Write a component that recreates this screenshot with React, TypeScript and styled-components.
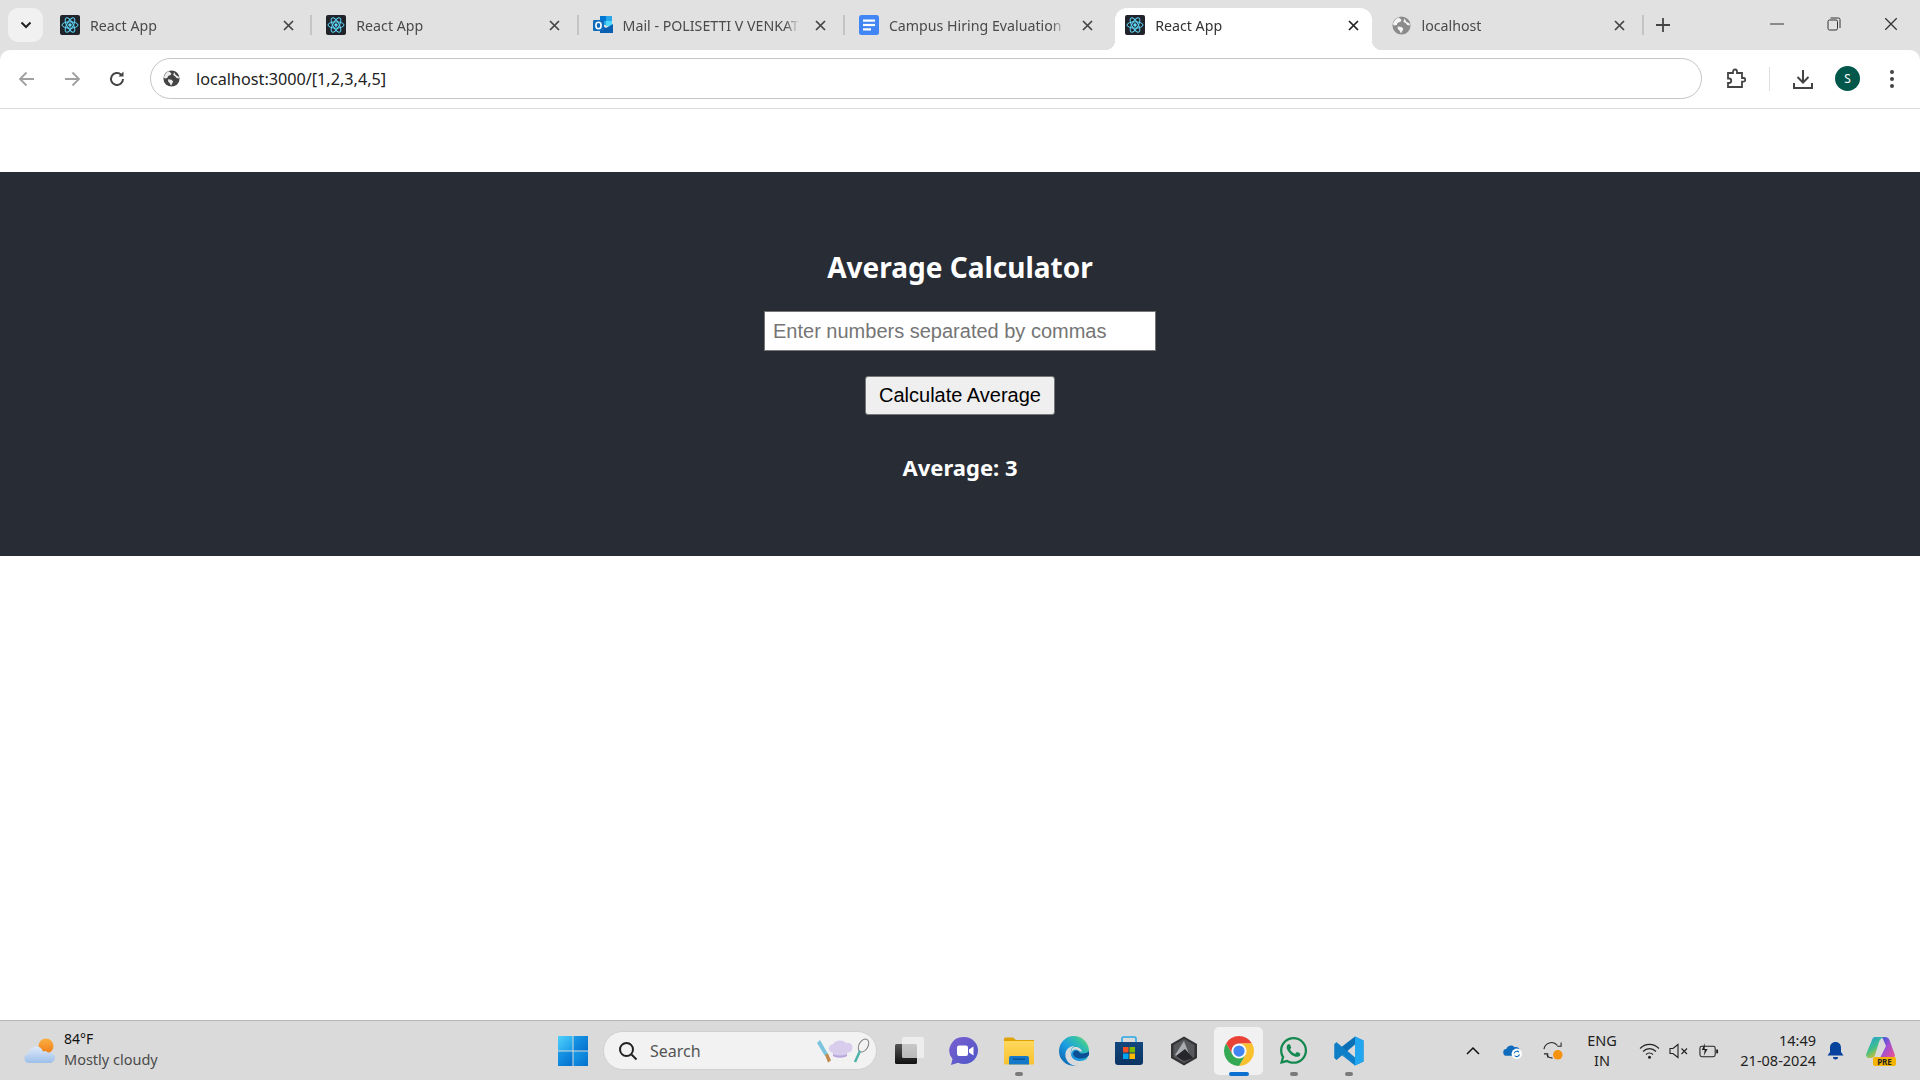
import React from "react";
import styled, { createGlobalStyle } from "styled-components";
import { FaWhatsapp } from "react-icons/fa";

const GlobalStyle = createGlobalStyle`
  html, body { margin: 0; padding: 0; background: #fff; overflow: hidden; }
  * { box-sizing: border-box; }
`;

const UI_FONT = `"Noto Sans", "Open Sans", sans-serif`;

const ReactIcon = () => (
  <svg width="20" height="20" viewBox="0 0 20 20">
    <rect width="20" height="20" rx="2" fill="#20232a" />
    <g fill="none" stroke="#61dafb" strokeWidth="1">
      <ellipse cx="10" cy="10" rx="8" ry="3.2" />
      <ellipse cx="10" cy="10" rx="8" ry="3.2" transform="rotate(60 10 10)" />
      <ellipse cx="10" cy="10" rx="8" ry="3.2" transform="rotate(120 10 10)" />
    </g>
    <circle cx="10" cy="10" r="1.7" fill="#61dafb" />
  </svg>
);

const OutlookIcon = () => (
  <svg width="20" height="20" viewBox="0 0 20 20">
    <rect x="7" y="1" width="12" height="9" fill="#28a8ea" />
    <rect x="7" y="1" width="6" height="5" fill="#0078d4" />
    <rect x="13" y="6" width="6" height="5" fill="#50d9ff" />
    <path d="M7 9l6 4 7-4v9H7z" fill="#0a5fb0" />
    <rect x="0" y="5" width="11" height="11" rx="1" fill="#0f6cbd" />
    <ellipse cx="5.5" cy="10.5" rx="2.6" ry="3.2" fill="none" stroke="#fff" strokeWidth="1.6" />
  </svg>
);

const DocsIcon = () => (
  <svg width="20" height="20" viewBox="0 0 20 20">
    <rect width="20" height="20" rx="2.5" fill="#4285f4" />
    <rect x="4" y="4.5" width="12" height="2.2" fill="#fff" />
    <rect x="4" y="8.9" width="12" height="2.2" fill="#fff" />
    <rect x="4" y="13.3" width="8" height="2.2" fill="#fff" />
  </svg>
);

const GlobeIcon = ({ color = "#8b8b8b", size = 19 }: { color?: string; size?: number }) => (
  <svg width={size} height={size} viewBox="0 0 20 20">
    <circle cx="10" cy="10" r="9.5" fill={color} />
    <path d="M7 1.5l3 2.5-1 2-3 1-1 2.5-3 .5-1-1.500C2 5 4 2.500 7 1.500z" fill="#fff" opacity="0.9" />
    <path d="M6 11l4 .5 2 2-1 2-1.500 3-1.500-3L6 13.500z" fill="#fff" opacity="0.9" />
    <path d="M13 2.500l2 3.500 3.500 2 .5 2-3-.5-1.500-2L12 6z" fill="#fff" opacity="0.9" />
  </svg>
);

const favicons = {
  react: <ReactIcon />,
  outlook: <OutlookIcon />,
  docs: <DocsIcon />,
  globe: <GlobeIcon />,
};

const tabList: { id: number; title: string; icon: keyof typeof favicons; active?: boolean }[] = [
  { id: 1, title: "React App", icon: "react" },
  { id: 2, title: "React App", icon: "react" },
  { id: 3, title: "Mail - POLISETTI V VENKAT", icon: "outlook" },
  { id: 4, title: "Campus Hiring Evaluation -", icon: "docs" },
  { id: 5, title: "React App", icon: "react", active: true },
  { id: 6, title: "localhost", icon: "globe" },
];

const CloseIcon = ({ size = 11, width = 1.7, color = "#444" }: { size?: number; width?: number; color?: string }) => (
  <svg width={size} height={size} viewBox="0 0 11 11">
    <path d="M1 1l9 9M10 1l-9 9" stroke={color} strokeWidth={width} fill="none" />
  </svg>
);

const centerApps = [
  { id: "task", label: "Task view" },
  { id: "meet", label: "Meet" },
  { id: "files", label: "Files", dot: true },
  { id: "edge", label: "Edge" },
  { id: "store", label: "Store" },
  { id: "hex", label: "Hex" },
  { id: "chrome", label: "Chrome", active: true },
  { id: "whatsapp", label: "WhatsApp", dot: true },
  { id: "code", label: "VS Code", dot: true },
];

const AppIcon = ({ id }: { id: string }) => {
  switch (id) {
    case "task":
      return (
        <svg width="30" height="30" viewBox="0 0 30 30">
          <defs>
            <linearGradient id="taskDark" x1="0" y1="0" x2="0" y2="1">
              <stop offset="0" stopColor="#555" />
              <stop offset="1" stopColor="#111" />
            </linearGradient>
          </defs>
          <rect x="1" y="8" width="22" height="20" rx="1.500" fill="url(#taskDark)" />
          <rect x="8" y="1" width="22" height="21" rx="1.500" fill="#f4f4f4" opacity="0.72" />
        </svg>
      );
    case "meet":
      return (
        <svg width="30" height="30" viewBox="0 0 30 30">
          <defs>
            <linearGradient id="meetBg" x1="0" y1="0" x2="1" y2="1">
              <stop offset="0" stopColor="#7b5fcf" />
              <stop offset="1" stopColor="#4c56c8" />
            </linearGradient>
          </defs>
          <path d="M15 1a14 13.500 0 1 1-6 25.700L2 29l1.500-6A14 13.500 0 0 1 15 1z" fill="url(#meetBg)" />
          <rect x="8" y="9.500" width="11" height="10.500" rx="2" fill="#fff" />
          <path d="M20 13.500l4.500-3v9l-4.500-3z" fill="#fff" />
        </svg>
      );
    case "files":
      return (
        <svg width="30" height="28" viewBox="0 0 30 28">
          <defs>
            <linearGradient id="folderBg" x1="0" y1="0" x2="0" y2="1">
              <stop offset="0" stopColor="#ffd85c" />
              <stop offset="1" stopColor="#f8c230" />
            </linearGradient>
          </defs>
          <path d="M0 2a1.500 1.500 0 0 1 1.500-1.500H9L12 3h18v4H0z" fill="#dfa200" />
          <rect x="0" y="4" width="30" height="23.500" rx="1" fill="url(#folderBg)" />
          <path d="M5 27.500V21a2 2 0 0 1 2-2h16a2 2 0 0 1 2 2v6.500z" fill="#1479c9" />
          <rect x="9" y="21.500" width="12" height="1.300" fill="#0b4f8e" />
        </svg>
      );
    case "edge":
      return (
        <svg width="30" height="30" viewBox="0 0 30 30">
          <defs>
            <linearGradient id="edgeBg" x1="0" y1="1" x2="1" y2="0">
              <stop offset="0" stopColor="#0b57a4" />
              <stop offset="0.45" stopColor="#1b9de2" />
              <stop offset="0.75" stopColor="#35c1a8" />
              <stop offset="1" stopColor="#86e35f" />
            </linearGradient>
          </defs>
          <circle cx="15" cy="15" r="15" fill="url(#edgeBg)" />
          <path d="M30 19c-2 3-6 3.500-9 3.500-4 0-7-2.500-7-5 0-2 2-3.500 4-3 3 .5 1.500 3 5 3 3.500 0 7-1 7-3" fill="#0c4f94" />
          <path d="M18.500 30C11 30 5.500 24 6.500 17.500 7.300 12 12 10 15 10c-3 2-4 5-3 9 1 3.500 4 6 9 6 3 0 6-1 8-3-2 5-6 8-10.500 8z" fill="#dadada" />
          <path d="M15 11c4-.5 7.500 1.500 8 4.500-3 .5-4-2-6.500-2-3 0-4.500 3-3.500 6-1.500-3.500-.5-7.500 2-8.500z" fill="#dadada" />
        </svg>
      );
    case "store":
      return (
        <svg width="30" height="30" viewBox="0 0 30 30">
          <defs>
            <linearGradient id="storeBg" x1="0" y1="0" x2="0" y2="1">
              <stop offset="0" stopColor="#12477f" />
              <stop offset="1" stopColor="#0b3463" />
            </linearGradient>
          </defs>
          <path d="M8 7V2.500A1.500 1.500 0 0 1 9.500 1h11A1.500 1.500 0 0 1 22 2.500V7" fill="none" stroke="#2aa7e8" strokeWidth="1.600" />
          <path d="M1 6h28v20a3 3 0 0 1-3 3H4a3 3 0 0 1-3-3z" fill="url(#storeBg)" />
          <rect x="9" y="11" width="5.500" height="5.500" fill="#f25022" />
          <rect x="15.500" y="11" width="5.500" height="5.500" fill="#7fba00" />
          <rect x="9" y="17.500" width="5.500" height="5.500" fill="#00a4ef" />
          <rect x="15.500" y="17.500" width="5.500" height="5.500" fill="#ffb900" />
        </svg>
      );
    case "hex":
      return (
        <svg width="28" height="30" viewBox="0 0 28 30">
          <path d="M14 0.500L27 8v14l-13 7.500L1 22V8z" fill="#333336" />
          <path d="M14 3L24.500 9v12L14 27 3.500 21V9z" fill="#55575b" />
          <path d="M14 5l5 13-11 3-3-2z" fill="#a9acb0" />
          <path d="M6 20l9-7 8 9-9 3z" fill="#26262a" />
        </svg>
      );
    case "chrome":
      return (
        <svg width="30" height="30" viewBox="0 0 24 24">
          <path d="M12 0A12 12 0 0 0 1.610 6L6.800 15A6 6 0 0 1 12 6h10.390A12 12 0 0 0 12 0z" fill="#ea4335" />
          <path d="M22.390 6H12a6 6 0 0 1 5.200 9L12 24A12 12 0 0 0 22.390 6z" fill="#fbc02d" />
          <path d="M1.610 6A12 12 0 0 0 12 24l5.200-9A6 6 0 0 1 6.800 15z" fill="#34a853" />
          <circle cx="12" cy="12" r="5.500" fill="#fff" />
          <circle cx="12" cy="12" r="4.500" fill="#4285f4" />
        </svg>
      );
    case "whatsapp":
      return <FaWhatsapp size={31} color="#14894f" />;
    default:
      return (
        <svg width="30" height="30" viewBox="0 0 30 30">
          <path d="M21 .5L29.500 4.500v21L21 29.500 8 17l13-10z" fill="#0e7fc9" />
          <path d="M21 .5L29.500 4.500v21L21 29.500z" fill="#23a6f0" />
          <path d="M21 .5V8L6 21l-3.500 3L.5 22V8l2-1 5 4z" fill="#0a6fb5" />
          <path d="M21 29.500V22L6 9 2.500 6 .5 8v14l2 1 5-4z" fill="#0e7fc9" opacity="0.9" />
          <path d="M21 8.500L13.500 15l7.500 6.500z" fill="#dadada" />
        </svg>
      );
  }
};

export default function App() {
  return (
    <>
      <GlobalStyle />
      <Screen>
        <TabStrip>
          <TabSearch>
            <svg width="12" height="8" viewBox="0 0 12 8">
              <path d="M1.500 1.500L6 6l4.500-4.500" stroke="#222" strokeWidth="2" fill="none" />
            </svg>
          </TabSearch>
          {tabList.map(({ id, title, icon, active }) => (
            <Tab key={id} $active={active}>
              <TabIcon>{favicons[icon]}</TabIcon>
              <TabTitle>{title}</TabTitle>
              <TabClose>
                <CloseIcon color={active ? "#222" : "#444"} />
              </TabClose>
              {!active && id !== 4 && <TabDivider />}
            </Tab>
          ))}
          <NewTab>
            <svg width="16" height="16" viewBox="0 0 16 16">
              <path d="M8 1v14M1 8h14" stroke="#444" strokeWidth="1.800" />
            </svg>
          </NewTab>
          <WindowButtons>
            <WindowButton>
              <svg width="14" height="14" viewBox="0 0 14 14">
                <path d="M0 7h14" stroke="#333" strokeWidth="1" />
              </svg>
            </WindowButton>
            <WindowButton>
              <svg width="14" height="14" viewBox="0 0 14 14">
                <rect x="1" y="3" width="9.500" height="10" rx="1.500" stroke="#333" fill="none" />
                <path d="M3.500 1h8a1.500 1.500 0 0 1 1.500 1.500V11" stroke="#333" fill="none" />
              </svg>
            </WindowButton>
            <WindowButton>
              <CloseIcon size={14} width={1} color="#333" />
            </WindowButton>
          </WindowButtons>
        </TabStrip>

        <Toolbar>
          <NavButton>
            <svg width="18" height="18" viewBox="0 0 18 18">
              <path d="M16 9H2.500M8.500 2.500L2 9l6.500 6.500" stroke="#a0a0a0" strokeWidth="1.800" fill="none" />
            </svg>
          </NavButton>
          <NavButton>
            <svg width="18" height="18" viewBox="0 0 18 18">
              <path d="M2 9h13.500M9.500 2.500L16 9l-6.500 6.500" stroke="#a0a0a0" strokeWidth="1.800" fill="none" />
            </svg>
          </NavButton>
          <NavButton>
            <svg width="18" height="18" viewBox="0 0 18 18">
              <path d="M15 9a6 6 0 1 1-1.800-4.300" stroke="#444" strokeWidth="2" fill="none" />
              <path d="M15.500 1.500v5h-5z" fill="#444" />
            </svg>
          </NavButton>
          <Omnibox>
            <GlobeIcon color="#444" size={17} />
            <UrlText>localhost:3000/[1,2,3,4,5]</UrlText>
          </Omnibox>
          <ToolIcons>
            <ToolButton>
              <svg width="20" height="22" viewBox="0 0 20 22">
                <path
                  d="M2 5h5V3.500a2 2 0 0 1 4 0V5h5v5h1.500a1.800 1.800 0 0 1 0 3.600H16V19H2v-4h1a2.200 2.200 0 0 0 0-4.500H2z"
                  stroke="#444"
                  strokeWidth="1.800"
                  fill="none"
                />
              </svg>
            </ToolButton>
            <ToolDivider />
            <ToolButton>
              <svg width="22" height="22" viewBox="0 0 22 22">
                <path d="M11 2v12M5.500 9l5.500 5.500L16.500 9" stroke="#444" strokeWidth="2" fill="none" />
                <path d="M2 15v5h18v-5" stroke="#444" strokeWidth="2" fill="none" />
              </svg>
            </ToolButton>
            <Avatar>S</Avatar>
            <ToolButton>
              <svg width="6" height="20" viewBox="0 0 6 20">
                <circle cx="3" cy="3" r="2" fill="#444" />
                <circle cx="3" cy="10" r="2" fill="#444" />
                <circle cx="3" cy="17" r="2" fill="#444" />
              </svg>
            </ToolButton>
          </ToolIcons>
        </Toolbar>

        <TopGap />

        <AppHeader>
          <Title>Average Calculator</Title>
          <NumbersInput type="text" placeholder="Enter numbers separated by commas" />
          <CalcButton>Calculate Average</CalcButton>
          <Result>Average: 3</Result>
        </AppHeader>

        <PageRest />

        <Taskbar>
          <Weather>
            <svg width="32" height="26" viewBox="0 0 32 26">
              <defs>
                <linearGradient id="sunFill" x1="0" y1="0" x2="0" y2="1">
                  <stop offset="0" stopColor="#fbb040" />
                  <stop offset="1" stopColor="#ef7d1a" />
                </linearGradient>
                <linearGradient id="cloudFill" x1="0" y1="0" x2="0" y2="1">
                  <stop offset="0" stopColor="#dfeafa" />
                  <stop offset="1" stopColor="#9dbfe9" />
                </linearGradient>
              </defs>
              <circle cx="22" cy="8" r="7.500" fill="url(#sunFill)" />
              <path
                d="M5 25a4.500 4.500 0 0 1-1-8.900C5 12 9 8 13 8.500c3 .3 5 2 6 5a4 4 0 0 1 5 1c4 0 7 1.500 7 5S28 25 25 25z"
                fill="url(#cloudFill)"
              />
            </svg>
            <WeatherText>
              <Temp>84°F</Temp>
              <Condition>Mostly cloudy</Condition>
            </WeatherText>
          </Weather>

          <StartButton>
            <svg width="30" height="30" viewBox="0 0 30 30">
              <defs>
                <linearGradient id="winA" x1="0" y1="0" x2="1" y2="1">
                  <stop offset="0" stopColor="#4fd0fb" />
                  <stop offset="1" stopColor="#1a9ce8" />
                </linearGradient>
                <linearGradient id="winB" x1="0" y1="0" x2="1" y2="1">
                  <stop offset="0" stopColor="#1a9ce8" />
                  <stop offset="1" stopColor="#0470ce" />
                </linearGradient>
              </defs>
              <rect x="0" y="0" width="14.500" height="14.500" fill="url(#winA)" />
              <rect x="15.500" y="0" width="14.500" height="14.500" fill="url(#winB)" />
              <rect x="0" y="15.500" width="14.500" height="14.500" fill="url(#winB)" />
              <rect x="15.500" y="15.500" width="14.500" height="14.500" fill="url(#winB)" />
            </svg>
          </StartButton>

          <SearchPill>
            <svg width="20" height="20" viewBox="0 0 20 20">
              <circle cx="8.500" cy="8.500" r="6.500" stroke="#222" strokeWidth="2" fill="none" />
              <path d="M13.500 13.500L18.500 18.500" stroke="#222" strokeWidth="2" />
            </svg>
            <SearchLabel>Search</SearchLabel>
            <svg width="54" height="26" viewBox="0 0 54 26">
              <path d="M1 5l3-3 8 14-3 2z" fill="#7cc4dd" />
              <path d="M9 17l3-1.500 3 7-3 2z" fill="#c08a4e" />
              <path d="M17 15c-5-1-6-8 0-9 2-4 10-5 13-1 5-1 8 3 6 7-1 2-3 2.500-5 3v3c-4 2-10 2-14 0z" fill="#d9cdee" />
              <path d="M17 16c4 2 10 2 14 0v2c-4 2-10 2-14 0z" fill="#b7a6da" />
              <ellipse cx="47.500" cy="7.500" rx="4.500" ry="7" transform="rotate(30 47.500 7.500)" fill="none" stroke="#7d7d7d" strokeWidth="1" />
              <path d="M44 13l-5 11" stroke="#4fb3a7" strokeWidth="2.500" />
            </svg>
          </SearchPill>

          <AppSlots>
            {centerApps.map(({ id, label, dot, active }) => (
              <AppSlot key={id} $active={active} title={label}>
                <AppIcon id={id} />
                {dot && <RunDot />}
                {active && <ActiveBar />}
              </AppSlot>
            ))}
          </AppSlots>

          <Tray>
            <TrayIcon $width={20}>
              <svg width="14" height="9" viewBox="0 0 14 9">
                <path d="M1 8l6-6 6 6" stroke="#111" strokeWidth="1.500" fill="none" />
              </svg>
            </TrayIcon>
            <TrayIcon $width={20} $left={20}>
              <svg width="21" height="18" viewBox="0 0 21 18">
                <path d="M4 14a3.500 3.500 0 0 1-.5-7C4.500 3 10 2 12 5c3-1 5.500 1 5.500 3.500A3 3 0 0 1 17 14z" fill="#0f6cbd" />
                <circle cx="14.500" cy="12" r="5.500" fill="#fff" />
                <path d="M11.800 11.500a2.800 2.800 0 0 1 5-1.200M17.200 12.500a2.800 2.800 0 0 1-5 1.200" stroke="#0f6cbd" strokeWidth="1.200" fill="none" />
              </svg>
            </TrayIcon>
            <TrayIcon $width={20} $left={20}>
              <svg width="21" height="22" viewBox="0 0 21 22">
                <path d="M1 9a8 8 0 0 1 14-4M19 2v4h-4M4 15.500c1.500 2 4 3 6 3M1 14h4v4" stroke="#222" strokeWidth="1.100" fill="none" />
                <circle cx="15.500" cy="15" r="5" fill="#f5920e" />
              </svg>
            </TrayIcon>
            <Lang>
              <span>ENG</span>
              <span>IN</span>
            </Lang>
            <TrayIcon $width={22} $left={19}>
              <svg width="21" height="16" viewBox="0 0 21 16">
                <path d="M1 5.500c5.500-5.500 13.500-5.500 19 0M4 8.500c3.800-3.800 9.200-3.800 13 0M7 11.500c2-2 5-2 7 0" stroke="#222" strokeWidth="1.100" fill="none" />
                <circle cx="10.500" cy="14.300" r="1.500" fill="#222" />
              </svg>
            </TrayIcon>
            <TrayIcon $width={20} $left={9}>
              <svg width="20" height="16" viewBox="0 0 20 16">
                <path d="M1 5.500h3L9 1.500v13l-5-4H1z" stroke="#222" strokeWidth="1.100" fill="none" />
                <path d="M12.500 5.500l5.500 5.500M18 5.500L12.500 11" stroke="#222" strokeWidth="1.100" />
              </svg>
            </TrayIcon>
            <TrayIcon $width={20} $left={10}>
              <svg width="21" height="17" viewBox="0 0 21 17">
                <rect x="1" y="4" width="16" height="11" rx="2" stroke="#222" strokeWidth="1.100" fill="none" />
                <rect x="18" y="7.500" width="2" height="4" fill="#222" />
                <path d="M6 1L3 8h3l-1 6 4-7H6z" fill="#222" />
              </svg>
            </TrayIcon>
            <Clock>
              <span>14:49</span>
              <span>21-08-2024</span>
            </Clock>
            <TrayIcon $width={18} $left={10}>
              <svg width="17" height="20" viewBox="0 0 17 20">
                <path d="M8.500 1C5 1 3 3.500 3 7v4l-2.500 3.500h16L14 11V7c0-3.500-2-6-5.500-6z" fill="#07439c" />
                <path d="M6 16h5a2.500 2.500 0 0 1-5 0z" fill="#07439c" />
              </svg>
            </TrayIcon>
            <Copilot>
              <svg width="30" height="24" viewBox="0 0 30 24">
                <defs>
                  <linearGradient id="copA" x1="0" y1="0" x2="0.600" y2="1">
                    <stop offset="0" stopColor="#1f9be6" />
                    <stop offset="0.55" stopColor="#3fbf8a" />
                    <stop offset="1" stopColor="#f0c020" />
                  </linearGradient>
                  <linearGradient id="copB" x1="0" y1="0" x2="1" y2="1">
                    <stop offset="0" stopColor="#1f5fe0" />
                    <stop offset="0.5" stopColor="#a64fd0" />
                    <stop offset="1" stopColor="#f0558a" />
                  </linearGradient>
                </defs>
                <path d="M19 1c2.500 0 4 1.500 4.700 3.500l5 14c.7 2-1 3.500-3 3.500H14l6-12-3-7c-.5-1.200-2-1.500-3-1.500z" fill="url(#copB)" />
                <path d="M9 1h10c-3 0-5 2-6 5L9 19c-.6 2-2 3-4 3H3c-2 0-3.500-2-2.800-4L6 4c.6-2 1.500-3 3-3z" fill="url(#copA)" />
              </svg>
              <PreBadge>PRE</PreBadge>
            </Copilot>
          </Tray>
        </Taskbar>
      </Screen>
    </>
  );
}

const Screen = styled.div`
  width: 1920px;
  height: 1080px;
  display: flex;
  flex-direction: column;
  font-family: ${UI_FONT};
  background: #e1e1e1;
  overflow: hidden;
`;

const TabStrip = styled.div`
  height: 50px;
  flex: none;
  display: flex;
  align-items: flex-end;
  padding-left: 8px;
`;

const TabSearch = styled.div`
  width: 35px;
  height: 34px;
  margin: 0 7px 8px 0;
  border-radius: 10px;
  background: #f1f1f1;
  display: flex;
  align-items: center;
  justify-content: center;
  flex: none;
`;

const Tab = styled.div<{ $active?: boolean }>`
  position: relative;
  width: ${(p) => (p.$active ? "256.8px" : "266.3px")};
  margin-right: ${(p) => (p.$active ? "9.5px" : "0")};
  height: 42px;
  flex: none;
  display: flex;
  align-items: center;
  padding: 0 ${(p) => (p.$active ? "13px" : "22.500px")} 8px 10px;
  border-radius: 12px 12px 0 0;
  background: ${(p) => (p.$active ? "#fff" : "transparent")};
  color: ${(p) => (p.$active ? "#333" : "#4a4a4a")};
  ${(p) =>
    p.$active &&
    `
    &::before, &::after {
      content: "";
      position: absolute;
      bottom: 0;
      width: 10px;
      height: 10px;
    }
    &::before {
      left: -10px;
      background: radial-gradient(circle at 0 0, transparent 10px, #fff 10.5px);
    }
    &::after {
      right: -10px;
      background: radial-gradient(circle at 100% 0, transparent 10px, #fff 10.5px);
    }
  `}
`;

const TabIcon = styled.span`
  width: 20px;
  height: 20px;
  flex: none;
  display: flex;
  align-items: center;
  justify-content: center;
`;

const TabTitle = styled.span`
  margin-left: 10px;
  width: 180px;
  font-size: 14.2px;
  white-space: nowrap;
  overflow: hidden;
  -webkit-mask-image: linear-gradient(to right, #000 90%, transparent 98%);
  mask-image: linear-gradient(to right, #000 90%, transparent 98%);
`;

const TabClose = styled.span`
  margin-left: auto;
  display: flex;
`;

const TabDivider = styled.span`
  position: absolute;
  right: 4px;
  top: 7px;
  width: 2px;
  height: 20px;
  background: #c4c4c4;
`;

const NewTab = styled.div`
  width: 16px;
  margin: 0 0 17px 7px;
  display: flex;
`;

const WindowButtons = styled.div`
  margin-left: auto;
  display: flex;
  align-items: center;
  height: 50px;
  padding-bottom: 3px;
  padding-right: 22px;
  gap: 43px;
`;

const WindowButton = styled.span`
  width: 14px;
  height: 14px;
  display: flex;
`;

const Toolbar = styled.div`
  height: 59px;
  flex: none;
  background: #fff;
  border-bottom: 1px solid #dcdcdc;
  border-radius: 10px 10px 0 0;
  display: flex;
  align-items: center;
  padding: 0 0 1px 18px;
`;

const NavButton = styled.div`
  width: 18px;
  height: 18px;
  margin-right: 27px;
  display: flex;
  flex: none;
`;

const Omnibox = styled.div`
  width: 1552px;
  height: 41px;
  margin-left: -3px;
  border: 1px solid #c4c4c4;
  border-radius: 21px;
  display: flex;
  align-items: center;
  padding-left: 12px;
  flex: none;
`;

const UrlText = styled.span`
  margin-left: 16px;
  font-size: 16.2px;
  color: #222;
`;

const ToolIcons = styled.div`
  flex: 1;
  display: flex;
  align-items: center;
  padding-left: 24px;
`;

const ToolButton = styled.span`
  display: flex;
  flex: none;
`;

const ToolDivider = styled.span`
  width: 1px;
  height: 24px;
  margin: 0 22px 0 23px;
  background: #dedede;
`;

const Avatar = styled.span`
  width: 25px;
  height: 25px;
  margin: 0 29px 0 21px;
  border-radius: 50%;
  background: #01574a;
  color: #fff;
  font-size: 12px;
  display: flex;
  align-items: center;
  justify-content: center;
  flex: none;
`;

const TopGap = styled.div`
  height: 63px;
  flex: none;
  background: #fff;
`;

const AppHeader = styled.header`
  height: 384px;
  flex: none;
  background: #282c34;
  display: flex;
  flex-direction: column;
  align-items: center;
  padding-top: 75px;
`;

const Title = styled.h2`
  margin: 0;
  font-size: 28px;
  line-height: 40px;
  font-weight: 700;
  color: #fff;
`;

const NumbersInput = styled.input`
  width: 392px;
  height: 40px;
  margin-top: 24px;
  padding: 0 8px;
  font-family: "Liberation Sans", Arial, sans-serif;
  font-size: 20px;
  background: #fff;
  border: 1px solid #767676;
  border-radius: 0;
  &::placeholder {
    color: #757575;
  }
`;

const CalcButton = styled.button`
  width: 190px;
  height: 39px;
  margin-top: 25px;
  padding: 0;
  font-family: "Liberation Sans", Arial, sans-serif;
  font-size: 20px;
  color: #000;
  background: #efefef;
  border: 1px solid #767676;
  border-radius: 3px;
`;

const Result = styled.p`
  margin: 37px 0 0;
  font-size: 22px;
  line-height: 30px;
  font-weight: 700;
  color: #fff;
`;

const PageRest = styled.div`
  flex: 1;
  background: #fff;
`;

const Taskbar = styled.footer`
  height: 60px;
  flex: none;
  background: #dadada;
  border-top: 1px solid #b6b6b6;
  display: flex;
  align-items: center;
  padding-left: 24px;
`;

const Weather = styled.div`
  width: 534px;
  display: flex;
  align-items: center;
  flex: none;
`;

const WeatherText = styled.div`
  margin-left: 8px;
  padding-bottom: 3px;
  display: flex;
  flex-direction: column;
`;

const Temp = styled.span`
  font-size: 14px;
  line-height: 20px;
  color: #111;
`;

const Condition = styled.span`
  font-size: 14.500px;
  line-height: 20px;
  color: #4a4a4a;
`;

const StartButton = styled.div`
  width: 45px;
  display: flex;
  flex: none;
`;

const SearchPill = styled.div`
  width: 274px;
  height: 39px;
  flex: none;
  border-radius: 20px;
  background: #f2f2f2;
  border: 1px solid #d0d0d0;
  display: flex;
  align-items: center;
  padding: 0 6px 0 14px;
`;

const SearchLabel = styled.span`
  margin-left: 12px;
  margin-right: auto;
  font-size: 16px;
  color: #555;
`;

const AppSlots = styled.div`
  display: flex;
  margin-left: 4px;
  flex: none;
`;

const AppSlot = styled.div<{ $active?: boolean }>`
  position: relative;
  width: 55px;
  height: 48px;
  display: flex;
  align-items: center;
  justify-content: center;
  & > svg {
    flex: none;
  }
  ${(p) =>
    p.$active &&
    `
    &::before {
      content: "";
      position: absolute;
      inset: 0 3px;
      border-radius: 5px;
      background: #f1f1f1;
    }
    & > svg { position: relative; }
  `}
`;

const RunDot = styled.span`
  position: absolute;
  left: 50%;
  bottom: -1px;
  width: 8px;
  height: 4px;
  margin-left: -4px;
  border-radius: 2px;
  background: #7a7a7a;
`;

const ActiveBar = styled.span`
  position: absolute;
  left: 50%;
  bottom: -1px;
  width: 20px;
  height: 4px;
  margin-left: -10px;
  border-radius: 2px;
  background: #0a6fd0;
`;

const Tray = styled.div`
  margin-left: 87px;
  display: flex;
  align-items: center;
  flex: none;
`;

const TrayIcon = styled.span<{ $width: number; $left?: number }>`
  width: ${(p) => p.$width}px;
  margin-left: ${(p) => p.$left ?? 0}px;
  display: flex;
  justify-content: center;
  flex: none;
`;

const Lang = styled.div`
  width: 34px;
  margin-left: 22px;
  padding-bottom: 2px;
  display: flex;
  flex-direction: column;
  align-items: center;
  font-size: 14.500px;
  line-height: 20px;
  color: #222;
`;

const Clock = styled.div`
  width: 86px;
  margin-left: 11px;
  padding-bottom: 2px;
  display: flex;
  flex-direction: column;
  align-items: flex-end;
  font-size: 14.500px;
  line-height: 20px;
  color: #222;
  white-space: nowrap;
`;

const Copilot = styled.div`
  position: relative;
  width: 30px;
  height: 30px;
  margin-left: 22px;
  flex: none;
`;

const PreBadge = styled.span`
  position: absolute;
  right: 0;
  bottom: 0;
  width: 23px;
  height: 9px;
  border-radius: 2px;
  background: #f4b400;
  color: #222;
  font-size: 8px;
  line-height: 9px;
  font-weight: 700;
  text-align: center;
`;
